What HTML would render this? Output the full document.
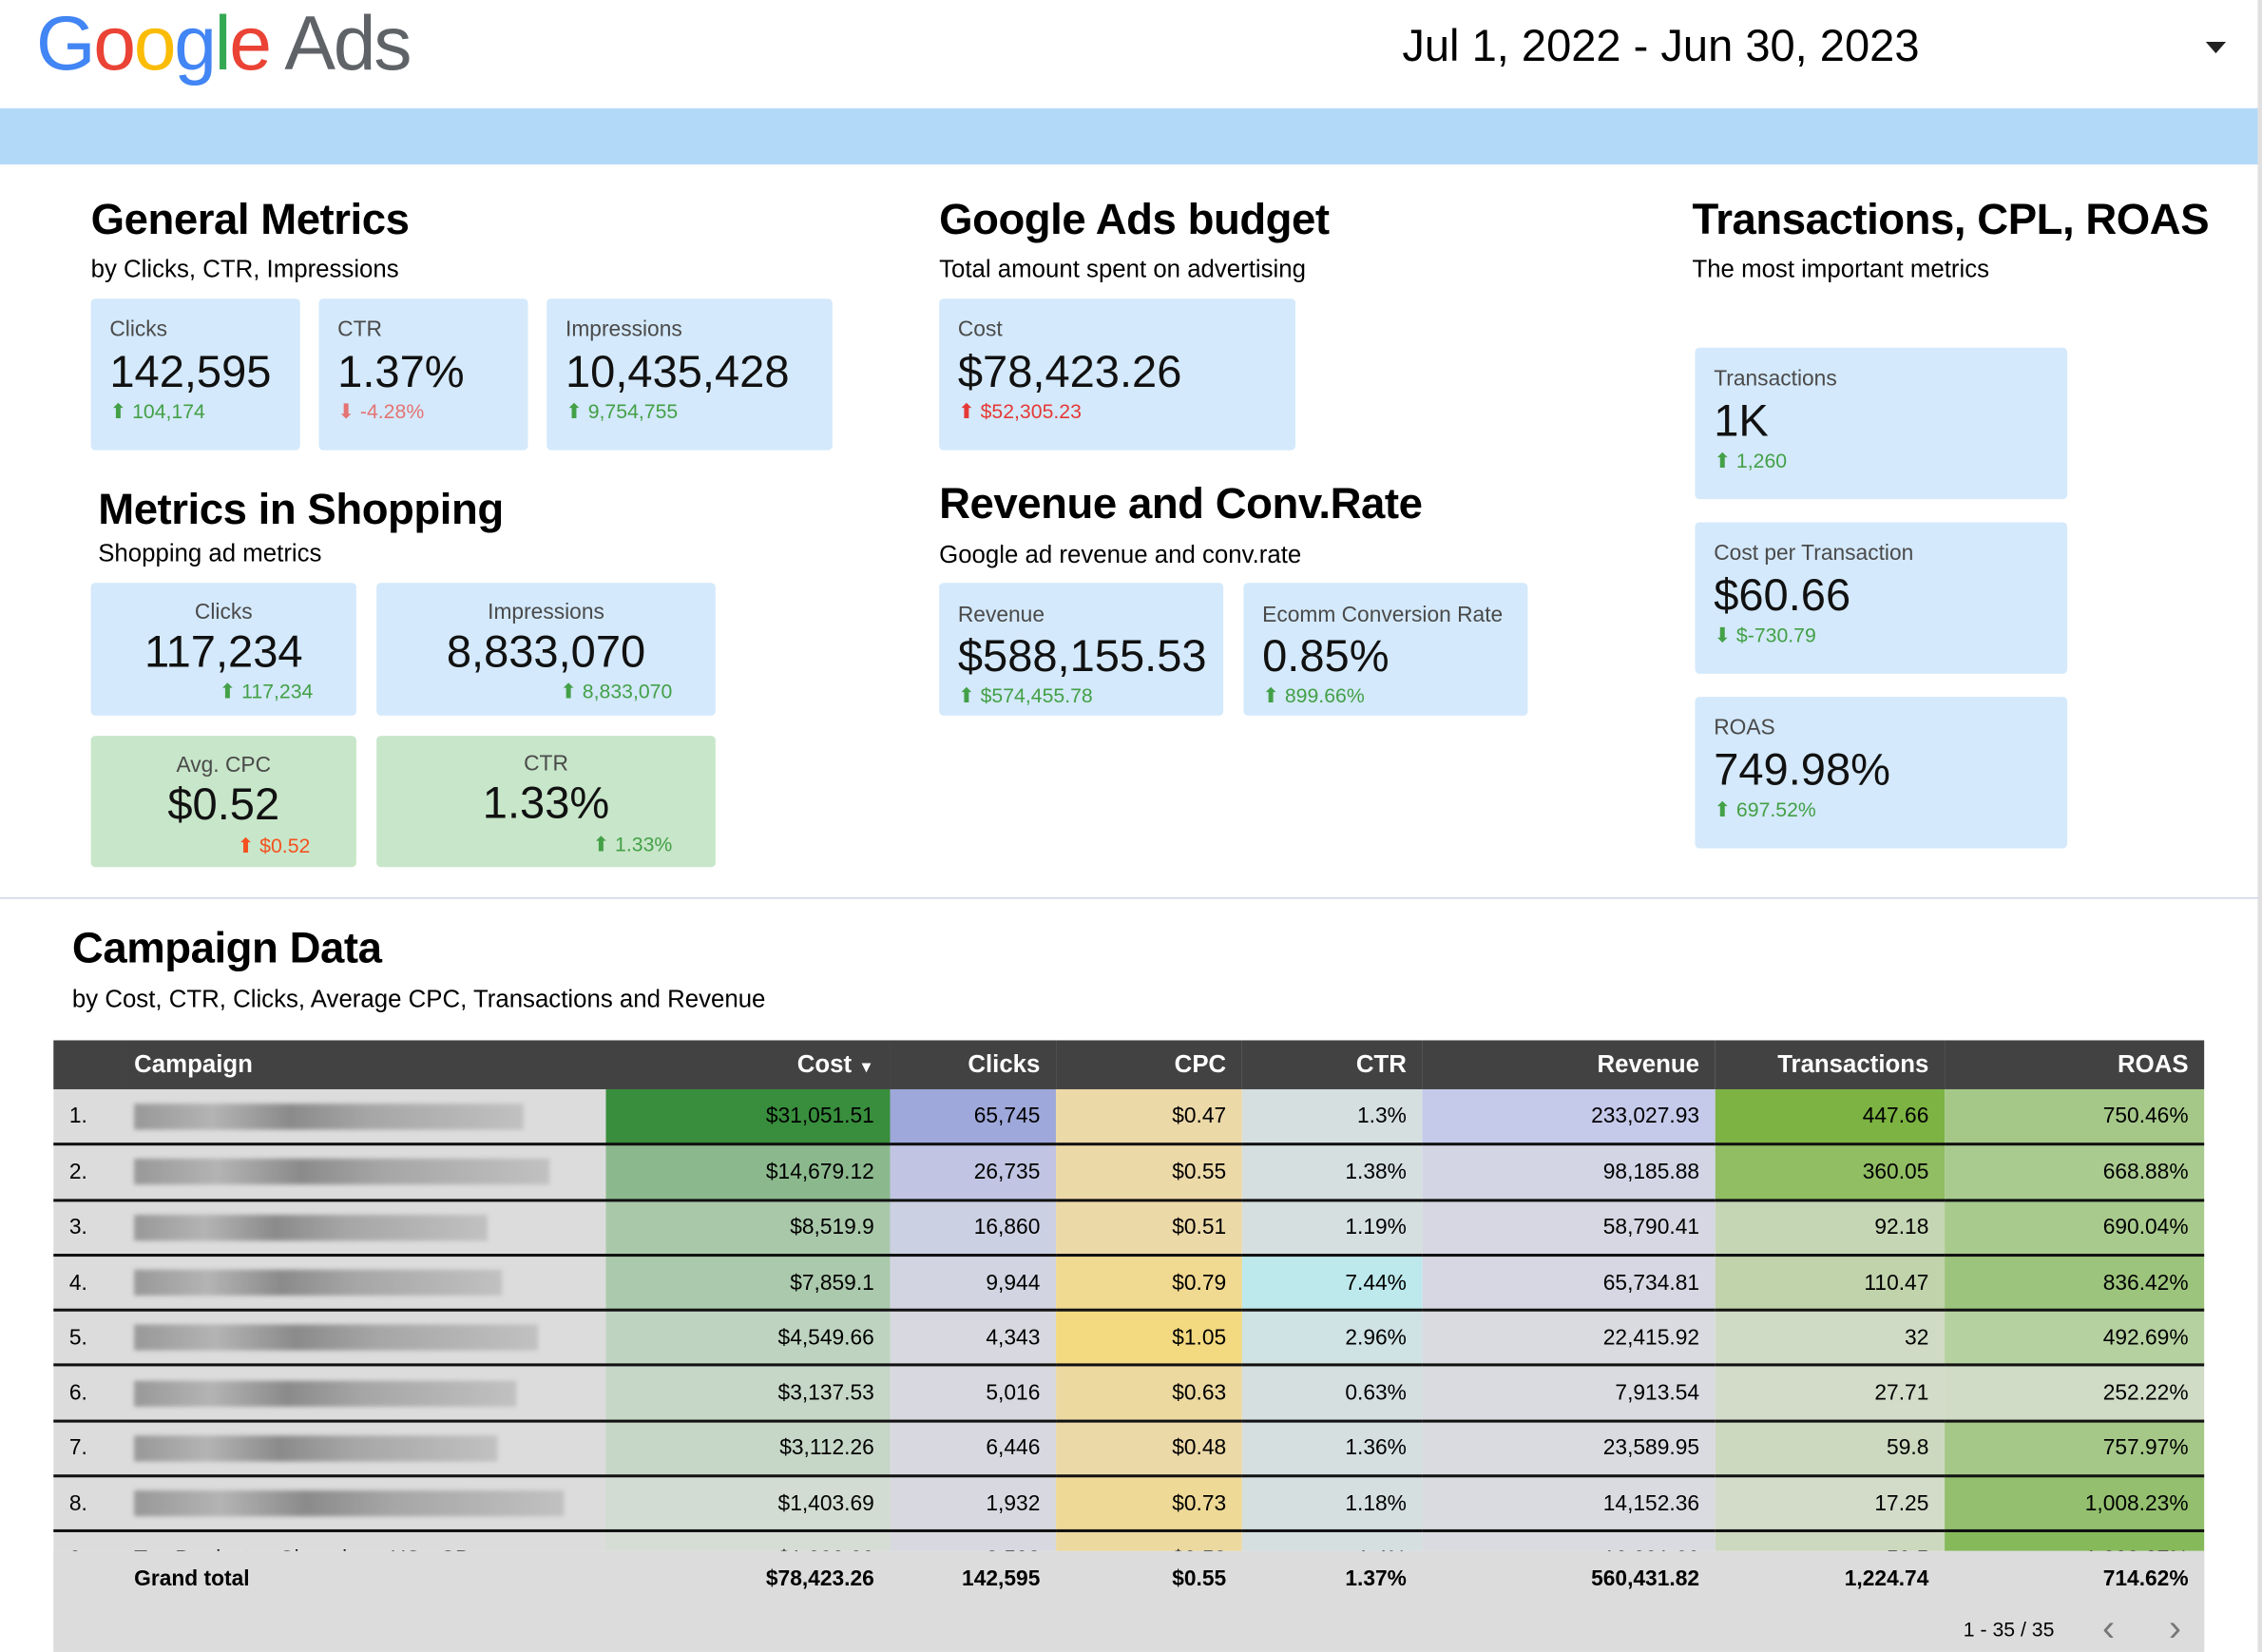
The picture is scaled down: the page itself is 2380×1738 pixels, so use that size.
<!DOCTYPE html>
<html><head><meta charset="utf-8"><style>
*{margin:0;padding:0;box-sizing:border-box}
html,body{width:2380px;height:1738px;overflow:hidden;background:#fff}
#s{position:absolute;left:0;top:0;width:1568px;height:1145px;transform:scale(1.51786);transform-origin:0 0;font-family:"Liberation Sans",Arial,sans-serif;color:#000}
.a{position:absolute}
.card{position:absolute;background:#d4e9fb;border-radius:3px}
.lbl{position:absolute;font-size:15px;color:#4a4a4a;white-space:nowrap}
.val{position:absolute;font-size:31px;color:#111;white-space:nowrap}
.dl{position:absolute;font-size:14px;color:#43a047;white-space:nowrap}
.h{position:absolute;font-size:30px;font-weight:bold;white-space:nowrap;letter-spacing:-0.3px}
.sub{position:absolute;font-size:17px;white-space:nowrap}
table{position:absolute;left:37px;top:721px;width:1491px;border-collapse:collapse;font-size:15px}
th{background:#424242;color:#fff;height:34px;font-weight:bold;text-align:right;padding:0 11px;font-size:17px}
td{height:38.3px;text-align:right;padding:0 11px;border-bottom:2px solid #111;background:#dcdcdc}
td.n{text-align:left;padding-left:11px}
.bl{display:inline-block;height:18px;background:linear-gradient(90deg,#888,#aaa 20%,#777 40%,#999 60%,#aaa 80%,#bbb);filter:blur(1.5px);opacity:.8;vertical-align:middle}
</style></head><body><div id="s">
<div class="a" style="left:25px;top:0px;font-size:53px;letter-spacing:-1.5px;white-space:nowrap"><span style="color:#4285f4">G</span><span style="color:#ea4335">o</span><span style="color:#fbbc05">o</span><span style="color:#4285f4">g</span><span style="color:#34a853">l</span><span style="color:#ea4335">e</span> <span style="color:#5f6368">Ads</span></div>
<div class="a" style="left:972px;top:14px;font-size:31px;white-space:nowrap">Jul 1, 2022 - Jun 30, 2023</div>
<div class="a" style="left:1529px;top:29px;width:0;height:0;border-left:7px solid transparent;border-right:7px solid transparent;border-top:8px solid #222"></div>
<div class="a" style="left:0;top:75px;width:1566px;height:39px;background:#b3d9f9"></div>
<div class="a" style="left:1565px;top:0;width:3px;height:1145px;background:#e0e0e0"></div>

<div class="h" style="left:63px;top:136px">General Metrics</div>
<div class="sub" style="left:63px;top:177px">by Clicks, CTR, Impressions</div>
<div class="card" style="left:63px;top:207px;width:145px;height:105px"><div class="lbl" style="left:13px;top:13px">Clicks</div><div class="val" style="left:13px;top:33px">142,595</div><div class="dl" style="left:13px;top:70px">⬆ 104,174</div></div>
<div class="card" style="left:221px;top:207px;width:145px;height:105px"><div class="lbl" style="left:13px;top:13px">CTR</div><div class="val" style="left:13px;top:33px">1.37%</div><div class="dl" style="left:13px;top:70px;color:#e57373">⬇ -4.28%</div></div>
<div class="card" style="left:379px;top:207px;width:198px;height:105px"><div class="lbl" style="left:13px;top:13px">Impressions</div><div class="val" style="left:13px;top:33px">10,435,428</div><div class="dl" style="left:13px;top:70px">⬆ 9,754,755</div></div>

<div class="h" style="left:651px;top:136px">Google Ads budget</div>
<div class="sub" style="left:651px;top:177px">Total amount spent on advertising</div>
<div class="card" style="left:651px;top:207px;width:247px;height:105px"><div class="lbl" style="left:13px;top:13px">Cost</div><div class="val" style="left:13px;top:33px">$78,423.26</div><div class="dl" style="left:13px;top:70px;color:#e53935">⬆ $52,305.23</div></div>

<div class="h" style="left:1173px;top:136px">Transactions, CPL, ROAS</div>
<div class="sub" style="left:1173px;top:177px">The most important metrics</div>
<div class="card" style="left:1175px;top:241px;width:258px;height:105px"><div class="lbl" style="left:13px;top:13px">Transactions</div><div class="val" style="left:13px;top:33px">1K</div><div class="dl" style="left:13px;top:70px">⬆ 1,260</div></div>
<div class="card" style="left:1175px;top:362px;width:258px;height:105px"><div class="lbl" style="left:13px;top:13px">Cost per Transaction</div><div class="val" style="left:13px;top:33px">$60.66</div><div class="dl" style="left:13px;top:70px">⬇ $-730.79</div></div>
<div class="card" style="left:1175px;top:483px;width:258px;height:105px"><div class="lbl" style="left:13px;top:13px">ROAS</div><div class="val" style="left:13px;top:33px">749.98%</div><div class="dl" style="left:13px;top:70px">⬆ 697.52%</div></div>

<div class="h" style="left:68px;top:337px">Metrics in Shopping</div>
<div class="sub" style="left:68px;top:374px">Shopping ad metrics</div>
<div class="card" style="left:63px;top:404px;width:184px;height:92px"><div class="lbl" style="left:0;width:100%;text-align:center;top:12px">Clicks</div><div class="val" style="left:0;width:100%;text-align:center;top:30px">117,234</div><div class="dl" style="right:30px;top:67px">⬆ 117,234</div></div>
<div class="card" style="left:261px;top:404px;width:235px;height:92px"><div class="lbl" style="left:0;width:100%;text-align:center;top:12px">Impressions</div><div class="val" style="left:0;width:100%;text-align:center;top:30px">8,833,070</div><div class="dl" style="right:30px;top:67px">⬆ 8,833,070</div></div>
<div class="card" style="left:63px;top:510px;width:184px;height:91px;background:#c8e6c9"><div class="lbl" style="left:0;width:100%;text-align:center;top:12px">Avg. CPC</div><div class="val" style="left:0;width:100%;text-align:center;top:30px">$0.52</div><div class="dl" style="right:32px;top:68px;color:#f4511e">⬆ $0.52</div></div>
<div class="card" style="left:261px;top:510px;width:235px;height:91px;background:#c8e6c9"><div class="lbl" style="left:0;width:100%;text-align:center;top:11px">CTR</div><div class="val" style="left:0;width:100%;text-align:center;top:29px">1.33%</div><div class="dl" style="right:30px;top:67px">⬆ 1.33%</div></div>

<div class="h" style="left:651px;top:333px">Revenue and Conv.Rate</div>
<div class="sub" style="left:651px;top:375px">Google ad revenue and conv.rate</div>
<div class="card" style="left:651px;top:404px;width:197px;height:92px"><div class="lbl" style="left:13px;top:14px">Revenue</div><div class="val" style="left:13px;top:33px">$588,155.53</div><div class="dl" style="left:13px;top:70px">⬆ $574,455.78</div></div>
<div class="card" style="left:862px;top:404px;width:197px;height:92px"><div class="lbl" style="left:13px;top:14px">Ecomm Conversion Rate</div><div class="val" style="left:13px;top:33px">0.85%</div><div class="dl" style="left:13px;top:70px">⬆ 899.66%</div></div>

<div class="a" style="left:0;top:622px;width:1566px;height:1px;background:#cfd8e3"></div>
<div class="h" style="left:50px;top:641px">Campaign Data</div>
<div class="sub" style="left:50px;top:683px">by Cost, CTR, Clicks, Average CPC, Transactions and Revenue</div>

<div class="a" style="left:37px;top:721px;width:1491px;height:354px;overflow:hidden">
<table style="left:0;top:0">
<colgroup><col style="width:48px"><col style="width:335px"><col style="width:197px"><col style="width:115px"><col style="width:129px"><col style="width:125px"><col style="width:203px"><col style="width:159px"><col style="width:180px"></colgroup>
<tr><th></th><th style="text-align:left;padding-left:8px">Campaign</th><th>Cost <span style="font-size:11px">▼</span></th><th>Clicks</th><th>CPC</th><th>CTR</th><th>Revenue</th><th>Transactions</th><th>ROAS</th></tr>
<tr><td class="n">1.</td><td style="text-align:left;padding-left:8px"><span class="bl" style="width:270px"></span></td><td style="background:#388e3c">$31,051.51</td><td style="background:#9fa8da">65,745</td><td style="background:#ecd9a8">$0.47</td><td style="background:#d5dfe0">1.3%</td><td style="background:#c5c9ea">233,027.93</td><td style="background:#7cb342">447.66</td><td style="background:#a5c888">750.46%</td></tr>
<tr><td class="n">2.</td><td style="text-align:left;padding-left:8px"><span class="bl" style="width:288px"></span></td><td style="background:#8bb98d">$14,679.12</td><td style="background:#c1c5e3">26,735</td><td style="background:#ecd9a8">$0.55</td><td style="background:#d5dfe0">1.38%</td><td style="background:#d3d5e5">98,185.88</td><td style="background:#91bd63">360.05</td><td style="background:#aacb90">668.88%</td></tr>
<tr><td class="n">3.</td><td style="text-align:left;padding-left:8px"><span class="bl" style="width:245px"></span></td><td style="background:#a9c8aa">$8,519.9</td><td style="background:#ccd0e3">16,860</td><td style="background:#ecd9a8">$0.51</td><td style="background:#d5dfe0">1.19%</td><td style="background:#d6d7e2">58,790.41</td><td style="background:#c5d6b4">92.18</td><td style="background:#a8ca8d">690.04%</td></tr>
<tr><td class="n">4.</td><td style="text-align:left;padding-left:8px"><span class="bl" style="width:255px"></span></td><td style="background:#abc9ac">$7,859.1</td><td style="background:#d2d4e2">9,944</td><td style="background:#f0d990">$0.79</td><td style="background:#bde9ec">7.44%</td><td style="background:#d6d7e2">65,734.81</td><td style="background:#c0d3ab">110.47</td><td style="background:#9cc47c">836.42%</td></tr>
<tr><td class="n">5.</td><td style="text-align:left;padding-left:8px"><span class="bl" style="width:280px"></span></td><td style="background:#bfd4c0">$4,549.66</td><td style="background:#d8d9e0">4,343</td><td style="background:#f3d97f">$1.05</td><td style="background:#cfe2e4">2.96%</td><td style="background:#dadbe0">22,415.92</td><td style="background:#d0dbc6">32</td><td style="background:#b6d1a0">492.69%</td></tr>
<tr><td class="n">6.</td><td style="text-align:left;padding-left:8px"><span class="bl" style="width:265px"></span></td><td style="background:#c6d6c7">$3,137.53</td><td style="background:#d8d9e0">5,016</td><td style="background:#ecd9a0">$0.63</td><td style="background:#d5dfe0">0.63%</td><td style="background:#dadbe0">7,913.54</td><td style="background:#d2dcc8">27.71</td><td style="background:#d0dcc6">252.22%</td></tr>
<tr><td class="n">7.</td><td style="text-align:left;padding-left:8px"><span class="bl" style="width:252px"></span></td><td style="background:#c6d6c7">$3,112.26</td><td style="background:#d8d9e0">6,446</td><td style="background:#ecd9a8">$0.48</td><td style="background:#d5dfe0">1.36%</td><td style="background:#dadbe0">23,589.95</td><td style="background:#ccd9bf">59.8</td><td style="background:#a5c888">757.97%</td></tr>
<tr><td class="n">8.</td><td style="text-align:left;padding-left:8px"><span class="bl" style="width:298px"></span></td><td style="background:#d2dcd2">$1,403.69</td><td style="background:#d8d9e0">1,932</td><td style="background:#eed996">$0.73</td><td style="background:#d5dfe0">1.18%</td><td style="background:#dadbe0">14,152.36</td><td style="background:#d3dcc9">17.25</td><td style="background:#93bf6e">1,008.23%</td></tr>
<tr><td class="n">9.</td><td style="text-align:left;padding-left:8px">Top Products - Shopping - US - CP</td><td style="background:#d5ddd5">$1,090.00</td><td style="background:#d8d9e0">2,598</td><td style="background:#ecd9a0">$0.52</td><td style="background:#d5dfe0">1.4%</td><td style="background:#dadbe0">16,091.66</td><td style="background:#ccd9bf">59.5</td><td style="background:#86b95a">1,090.07%</td></tr>
</table></div>
<div class="a" style="left:37px;top:1075px;width:1491px;height:70px;background:#dcdcdc;font-size:15px;font-weight:bold">
<div class="a" style="left:56px;top:11px">Grand total</div>
<div class="a" style="right:922px;top:11px">$78,423.26</div>
<div class="a" style="right:807px;top:11px">142,595</div>
<div class="a" style="right:678px;top:11px">$0.55</div>
<div class="a" style="right:553px;top:11px">1.37%</div>
<div class="a" style="right:350px;top:11px">560,431.82</div>
<div class="a" style="right:191px;top:11px">1,224.74</div>
<div class="a" style="right:11px;top:11px">714.62%</div>
<div class="a" style="right:104px;top:46px;font-weight:normal;font-size:14px">1 - 35 / 35</div>
<div class="a" style="right:62px;top:38px;font-weight:normal;font-size:26px;color:#777">‹</div>
<div class="a" style="right:16px;top:38px;font-weight:normal;font-size:26px;color:#777">›</div>
</div>
</div></body></html>
